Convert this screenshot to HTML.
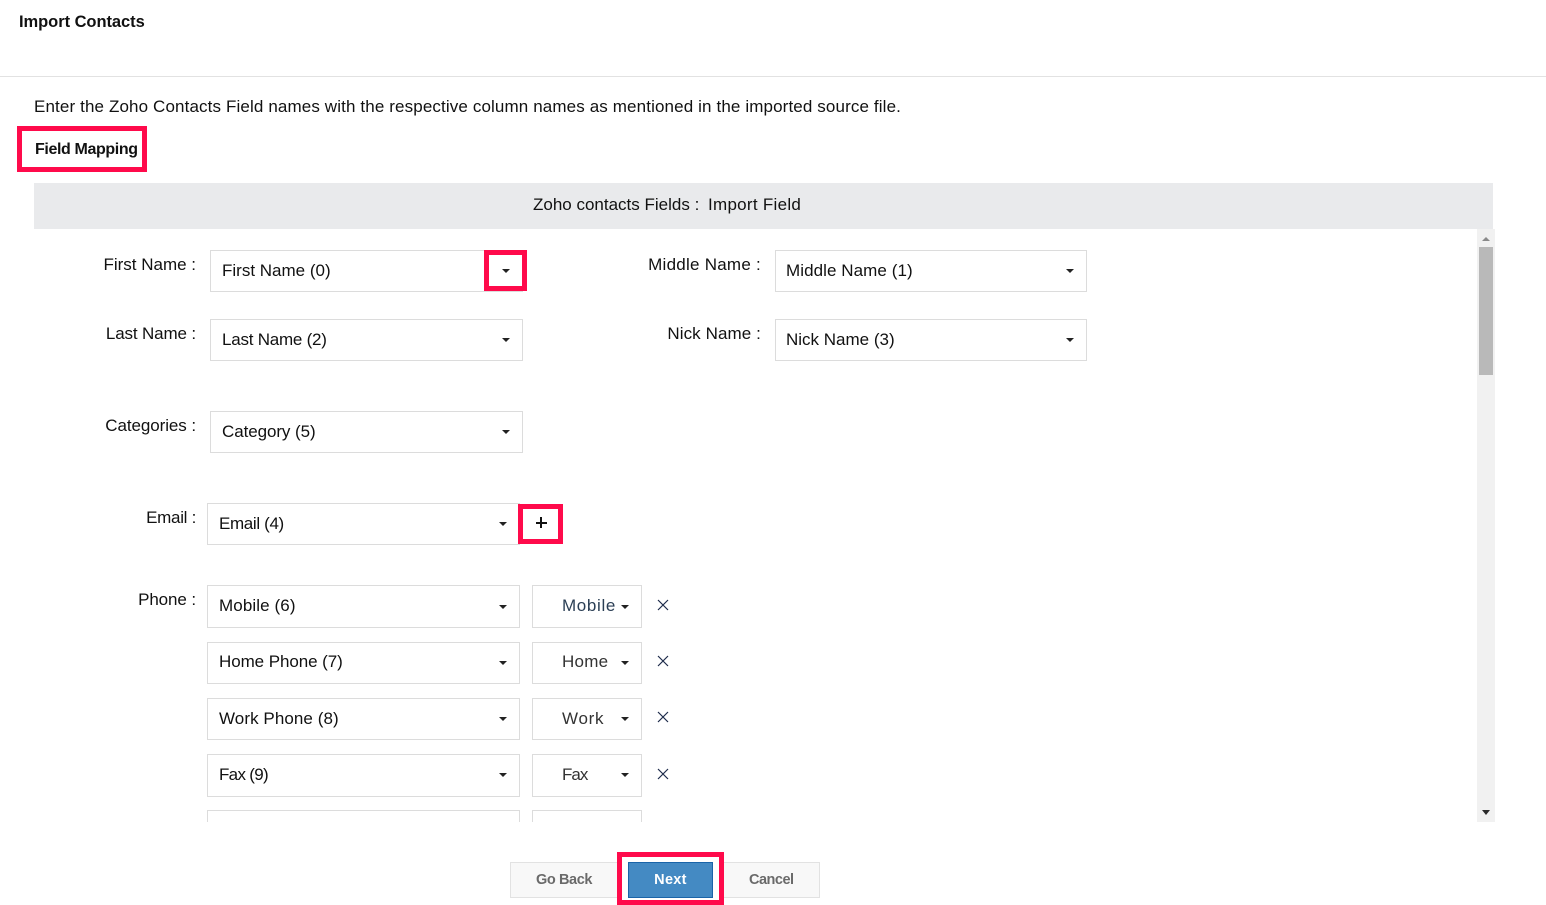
<!DOCTYPE html>
<html><head><meta charset="utf-8"><style>
html,body{margin:0;padding:0;background:#fff;width:1546px;height:905px;overflow:hidden}
body{font-family:"Liberation Sans",sans-serif;font-size:17px;color:#111;position:relative}
.a{position:absolute;white-space:nowrap;line-height:20px}
.box{position:absolute;box-sizing:border-box;border:1px solid #dcdcdc;background:#fff}
.l{position:absolute;white-space:nowrap;line-height:20px;text-align:right;right:1350px}
.c{position:absolute;width:0;height:0;border-left:4px solid transparent;border-right:4px solid transparent;border-top:4px solid #222}
.r{position:absolute;box-sizing:border-box;border:5px solid #ff0a4b}
.x{position:absolute;width:12px;height:12px}
.b{position:absolute;box-sizing:border-box;text-align:center;font-size:14.5px;font-weight:bold}
</style></head><body>
<div class="a" style="left:19px;top:12px;font-weight:bold;font-size:16.5px;letter-spacing:-.05px">Import Contacts</div>
<div style="position:absolute;left:0;top:76px;width:1546px;height:1px;background:#e2e2e2"></div>
<div class="a" style="left:34px;top:97px;letter-spacing:.125px">Enter the Zoho Contacts Field names with the respective column names as mentioned in the imported source file.</div>
<div class="r" style="left:17px;top:126px;width:130px;height:46px"></div>
<div class="a" style="left:35px;top:140px;font-weight:bold;font-size:16px;letter-spacing:-.38px">Field Mapping</div>
<div style="position:absolute;left:34px;top:183px;width:1459px;height:46px;background:#e9eaec"></div>
<div class="a" style="left:533px;top:195px">Zoho contacts Fields :<span style="position:absolute;left:175px;top:0;letter-spacing:.28px">Import Field</span></div>

<div class="l" style="top:255px">First Name :</div>
<div class="box" style="left:210px;top:250px;width:313px;height:42px"></div><div class="a" style="left:222px;top:261px">First Name (0)</div><div class="c" style="left:502px;top:269px"></div>
<div class="r" style="left:484px;top:250px;width:43px;height:41px"></div>

<div class="a" style="right:785px;top:255px;letter-spacing:.25px">Middle Name :</div>
<div class="box" style="left:775px;top:250px;width:312px;height:42px"></div><div class="a" style="left:786px;top:261px;letter-spacing:.07px">Middle Name (1)</div><div class="c" style="left:1066px;top:269px"></div>

<div class="l" style="top:324px;letter-spacing:-.14px">Last Name :</div>
<div class="box" style="left:210px;top:319px;width:313px;height:42px"></div><div class="a" style="left:222px;top:330px;letter-spacing:-.23px">Last Name (2)</div><div class="c" style="left:502px;top:338px"></div>

<div class="a" style="right:785px;top:324px;letter-spacing:.1px">Nick Name :</div>
<div class="box" style="left:775px;top:319px;width:312px;height:42px"></div><div class="a" style="left:786px;top:330px">Nick Name (3)</div><div class="c" style="left:1066px;top:338px"></div>

<div class="l" style="top:416px;letter-spacing:-.08px">Categories :</div>
<div class="box" style="left:210px;top:411px;width:313px;height:42px"></div><div class="a" style="left:222px;top:422px;letter-spacing:-.08px">Category (5)</div><div class="c" style="left:502px;top:430px"></div>

<div class="l" style="top:508px;letter-spacing:-.3px">Email :</div>
<div class="box" style="left:207px;top:503px;width:313px;height:42px"></div><div class="a" style="left:219px;top:514px;letter-spacing:-.35px">Email (4)</div><div class="c" style="left:499px;top:522px"></div>
<div class="r" style="left:518px;top:504px;width:45px;height:40px"></div>
<div style="position:absolute;left:535.5px;top:522px;width:11px;height:1.5px;background:#111"></div>
<div style="position:absolute;left:540.3px;top:517px;width:1.5px;height:11px;background:#111"></div>

<div class="l" style="top:590px;letter-spacing:-.1px">Phone :</div>
<div class="box" style="left:207px;top:585px;width:313px;height:43px"></div><div class="a" style="left:219px;top:596px;letter-spacing:.1px">Mobile (6)</div><div class="c" style="left:499px;top:605px"></div>
<div class="box" style="left:532px;top:585px;width:110px;height:43px"></div><div class="a" style="left:562px;top:596px;color:#2b3f55;letter-spacing:.65px">Mobile</div><div class="c" style="left:621px;top:605px"></div>
<svg class="x" style="left:657px;top:599px" viewBox="0 0 12 12"><path d="M1 1L11 11M11 1L1 11" stroke="#1d2a4a" stroke-width="1.2" fill="none"/></svg>

<div class="box" style="left:207px;top:642px;width:313px;height:42px"></div><div class="a" style="left:219px;top:652px;letter-spacing:-.07px">Home Phone (7)</div><div class="c" style="left:499px;top:661px"></div>
<div class="box" style="left:532px;top:642px;width:110px;height:42px"></div><div class="a" style="left:562px;top:652px;color:#333;letter-spacing:.25px">Home</div><div class="c" style="left:621px;top:661px"></div>
<svg class="x" style="left:657px;top:655px" viewBox="0 0 12 12"><path d="M1 1L11 11M11 1L1 11" stroke="#1d2a4a" stroke-width="1.2" fill="none"/></svg>

<div class="box" style="left:207px;top:698px;width:313px;height:42px"></div><div class="a" style="left:219px;top:709px;letter-spacing:.07px">Work Phone (8)</div><div class="c" style="left:499px;top:717px"></div>
<div class="box" style="left:532px;top:698px;width:110px;height:42px"></div><div class="a" style="left:562px;top:709px;color:#333;letter-spacing:.7px">Work</div><div class="c" style="left:621px;top:717px"></div>
<svg class="x" style="left:657px;top:711px" viewBox="0 0 12 12"><path d="M1 1L11 11M11 1L1 11" stroke="#1d2a4a" stroke-width="1.2" fill="none"/></svg>

<div class="box" style="left:207px;top:754px;width:313px;height:43px"></div><div class="a" style="left:219px;top:765px;letter-spacing:-.7px">Fax (9)</div><div class="c" style="left:499px;top:773px"></div>
<div class="box" style="left:532px;top:754px;width:110px;height:43px"></div><div class="a" style="left:562px;top:765px;color:#333;letter-spacing:-1px">Fax</div><div class="c" style="left:621px;top:773px"></div>
<svg class="x" style="left:657px;top:768px" viewBox="0 0 12 12"><path d="M1 1L11 11M11 1L1 11" stroke="#1d2a4a" stroke-width="1.2" fill="none"/></svg>

<div style="position:absolute;left:207px;top:810px;width:313px;height:12px;overflow:hidden"><div class="box" style="left:0;top:0;width:313px;height:42px"></div></div>
<div style="position:absolute;left:532px;top:810px;width:110px;height:12px;overflow:hidden"><div class="box" style="left:0;top:0;width:110px;height:42px"></div></div>

<div style="position:absolute;left:1477px;top:229px;width:18px;height:593px;background:#f1f1f1"></div>
<div style="position:absolute;left:1479px;top:247px;width:14px;height:128px;background:#b9b9b9"></div>
<div style="position:absolute;left:1482px;top:237px;width:0;height:0;border-left:4px solid transparent;border-right:4px solid transparent;border-bottom:4px solid #8a8a8a"></div>
<div style="position:absolute;left:1482px;top:810px;width:0;height:0;border-left:4px solid transparent;border-right:4px solid transparent;border-top:5px solid #2b2b2b"></div>

<div class="b" style="left:510px;top:862px;width:310px;height:36px;background:#f8f8f8;border:1px solid #e2e2e2"></div>
<div class="a" style="left:536px;top:870px;font-size:14.5px;font-weight:bold;color:#6a6a6a;letter-spacing:-.4px">Go Back</div>
<div class="a" style="left:749px;top:870px;font-size:14.5px;font-weight:bold;color:#6a6a6a;letter-spacing:-.5px">Cancel</div>
<div style="position:absolute;left:622px;top:857px;width:97px;height:45px;background:#fff"></div>
<div class="r" style="left:617px;top:852px;width:107px;height:53px"></div>
<div class="b" style="left:628px;top:862px;width:85px;height:36px;background:#448ac3;border:1px solid #1a64a8;color:#fff;line-height:34px;letter-spacing:.3px">Next</div>
</body></html>
